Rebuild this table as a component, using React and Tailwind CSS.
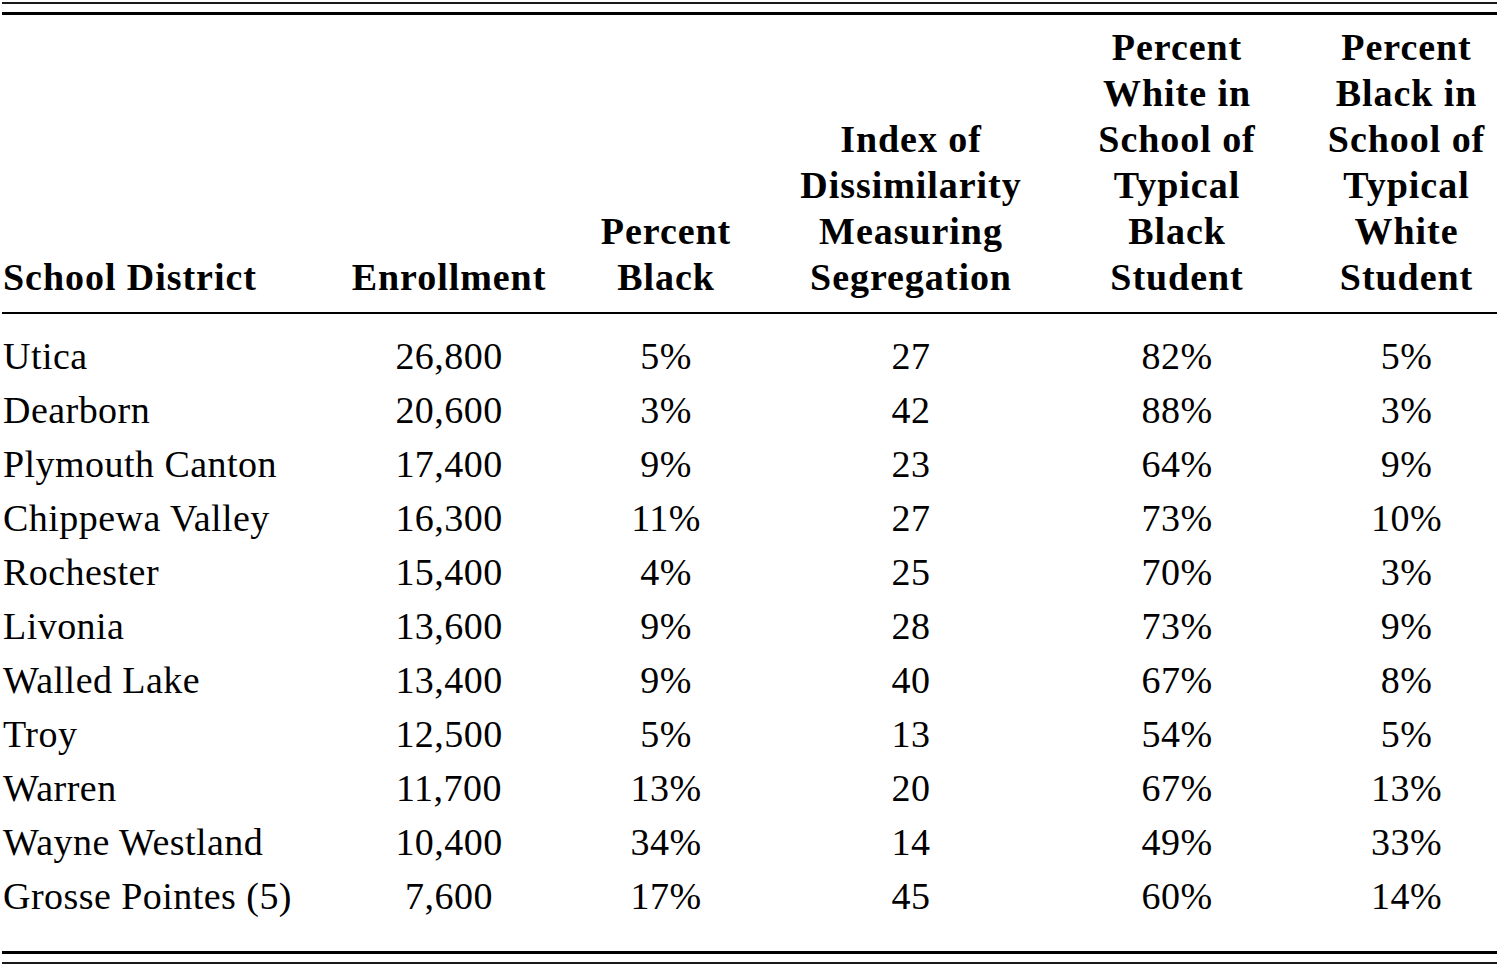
import React from 'react';

const rows = [
  ['Utica', '26,800', '5%', '27', '82%', '5%'],
  ['Dearborn', '20,600', '3%', '42', '88%', '3%'],
  ['Plymouth Canton', '17,400', '9%', '23', '64%', '9%'],
  ['Chippewa Valley', '16,300', '11%', '27', '73%', '10%'],
  ['Rochester', '15,400', '4%', '25', '70%', '3%'],
  ['Livonia', '13,600', '9%', '28', '73%', '9%'],
  ['Walled Lake', '13,400', '9%', '40', '67%', '8%'],
  ['Troy', '12,500', '5%', '13', '54%', '5%'],
  ['Warren', '11,700', '13%', '20', '67%', '13%'],
  ['Wayne Westland', '10,400', '34%', '14', '49%', '33%'],
  ['Grosse Pointes (5)', '7,600', '17%', '45', '60%', '14%'],
];

const headers = [
  ['School District'],
  ['Enrollment'],
  ['Percent', 'Black'],
  ['Index of', 'Dissimilarity', 'Measuring', 'Segregation'],
  ['Percent', 'White in', 'School of', 'Typical', 'Black', 'Student'],
  ['Percent', 'Black in', 'School of', 'Typical', 'White', 'Student'],
];

const cols = 'grid grid-cols-[348px_198px_236px_254px_278px_181px]';

export default function App() {
  return (
    <div
      className="w-[1499px] h-[967px] bg-white text-black px-[2px] pt-[2px]"
      style={{ fontFamily: '"Liberation Serif", "Times New Roman", serif' }}
    >
      {/* double rule on top */}
      <div className="h-[2px] bg-[#1a1a1a]" />
      <div className="h-[3px] mt-[8px] bg-black" />

      {/* header */}
      <div className={`${cols} items-end pt-[9px] pb-[12px] text-[38px] leading-[46px] font-bold tracking-[0.025em]`}>
        {headers.map((h, i) => (
          <div key={i} className={i === 0 ? 'text-left pl-[1px]' : 'text-center'}>
            {h.map(line => (
              <div key={line}>{line}</div>
            ))}
          </div>
        ))}
      </div>
      <div className="h-[2px] bg-black" />

      {/* body */}
      <div className="pt-[15px] text-[38px] leading-[54px] tracking-[0.012em]">
        {rows.map(r => (
          <div key={r[0]} className={cols}>
            {r.map((c, i) => (
              <div key={i} className={i === 0 ? 'text-left pl-[1px]' : 'text-center'}>
                {c}
              </div>
            ))}
          </div>
        ))}
      </div>

      {/* double rule at the bottom */}
      <div className="h-[3px] mt-[28px] bg-black" />
      <div className="h-[2px] mt-[8px] bg-[#1a1a1a]" />
    </div>
  );
}
